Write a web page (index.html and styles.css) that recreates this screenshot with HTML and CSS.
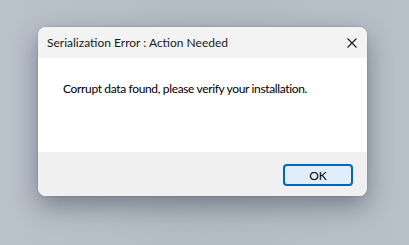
FILE: index.html
```html
<!DOCTYPE html>
<html lang="en">
<head>
    <meta charset="UTF-8">
    <title>Serialization Error</title>
    <link rel="stylesheet" href="styles.css">
</head>
<body>

<div class="dialog">
    <div class="titlebar">
        <span class="title">Serialization Error : Action Needed</span>
        <button class="close" aria-label="Close">
            <svg width="10" height="10" viewBox="0 0 10 10">
                <path d="M0.5 0.5 L9.5 9.5 M9.5 0.5 L0.5 9.5" stroke="#1a1a1a" stroke-width="1.1" fill="none"/>
            </svg>
        </button>
    </div>
    <div class="message">Corrupt data found, please verify your installation.</div>
    <div class="footer">
        <button class="ok">OK</button>
    </div>
</div>

</body>
</html>
```

FILE: styles.css
```css
body {
    margin: 0;
    padding: 27px 0 0 38px;
    height: 245px;
    box-sizing: border-box;
    background: linear-gradient(90deg, #bac2cc 0%, #b3bbc5 50%, #b8c0ca 100%);
    font-family: Lato, "Noto Sans", sans-serif;
    font-size: 12px;
    color: #1a1a1a;
    overflow: hidden;
}
.dialog {
    width: 329px;
    height: 169px;
    display: flex;
    flex-direction: column;
    border-radius: 8px;
    overflow: hidden;
    background: #fff;
    box-shadow: 0 10px 26px rgba(40, 48, 60, 0.45), 0 0 2px rgba(0, 0, 0, 0.25);
}
.titlebar {
    height: 31px;
    background: #f3f3f3;
    display: flex;
    align-items: center;
    justify-content: space-between;
    padding: 0 10px 0 9px;
}
.title {
    font-size: 12px;
    color: #1a1a1a;
}
.close {
    border: none;
    background: none;
    padding: 0;
    width: 10px;
    height: 10px;
    display: flex;
}
.message {
    flex: 1;
    background: #fff;
    padding: 23px 0 0 25px;
    color: #000;
    letter-spacing: -0.35px;
}
.footer {
    height: 44px;
    background: #f0f0f0;
    display: flex;
    justify-content: flex-end;
    align-items: flex-start;
    padding: 12px 14px 0 0;
    box-sizing: border-box;
}
.ok {
    width: 70px;
    height: 22px;
    border: 2px solid #0067c0;
    border-radius: 4px;
    background: #e0eef9;
    font-family: Lato, "Noto Sans", sans-serif;
    font-size: 12px;
    color: #000;
    padding: 0;
}
```
